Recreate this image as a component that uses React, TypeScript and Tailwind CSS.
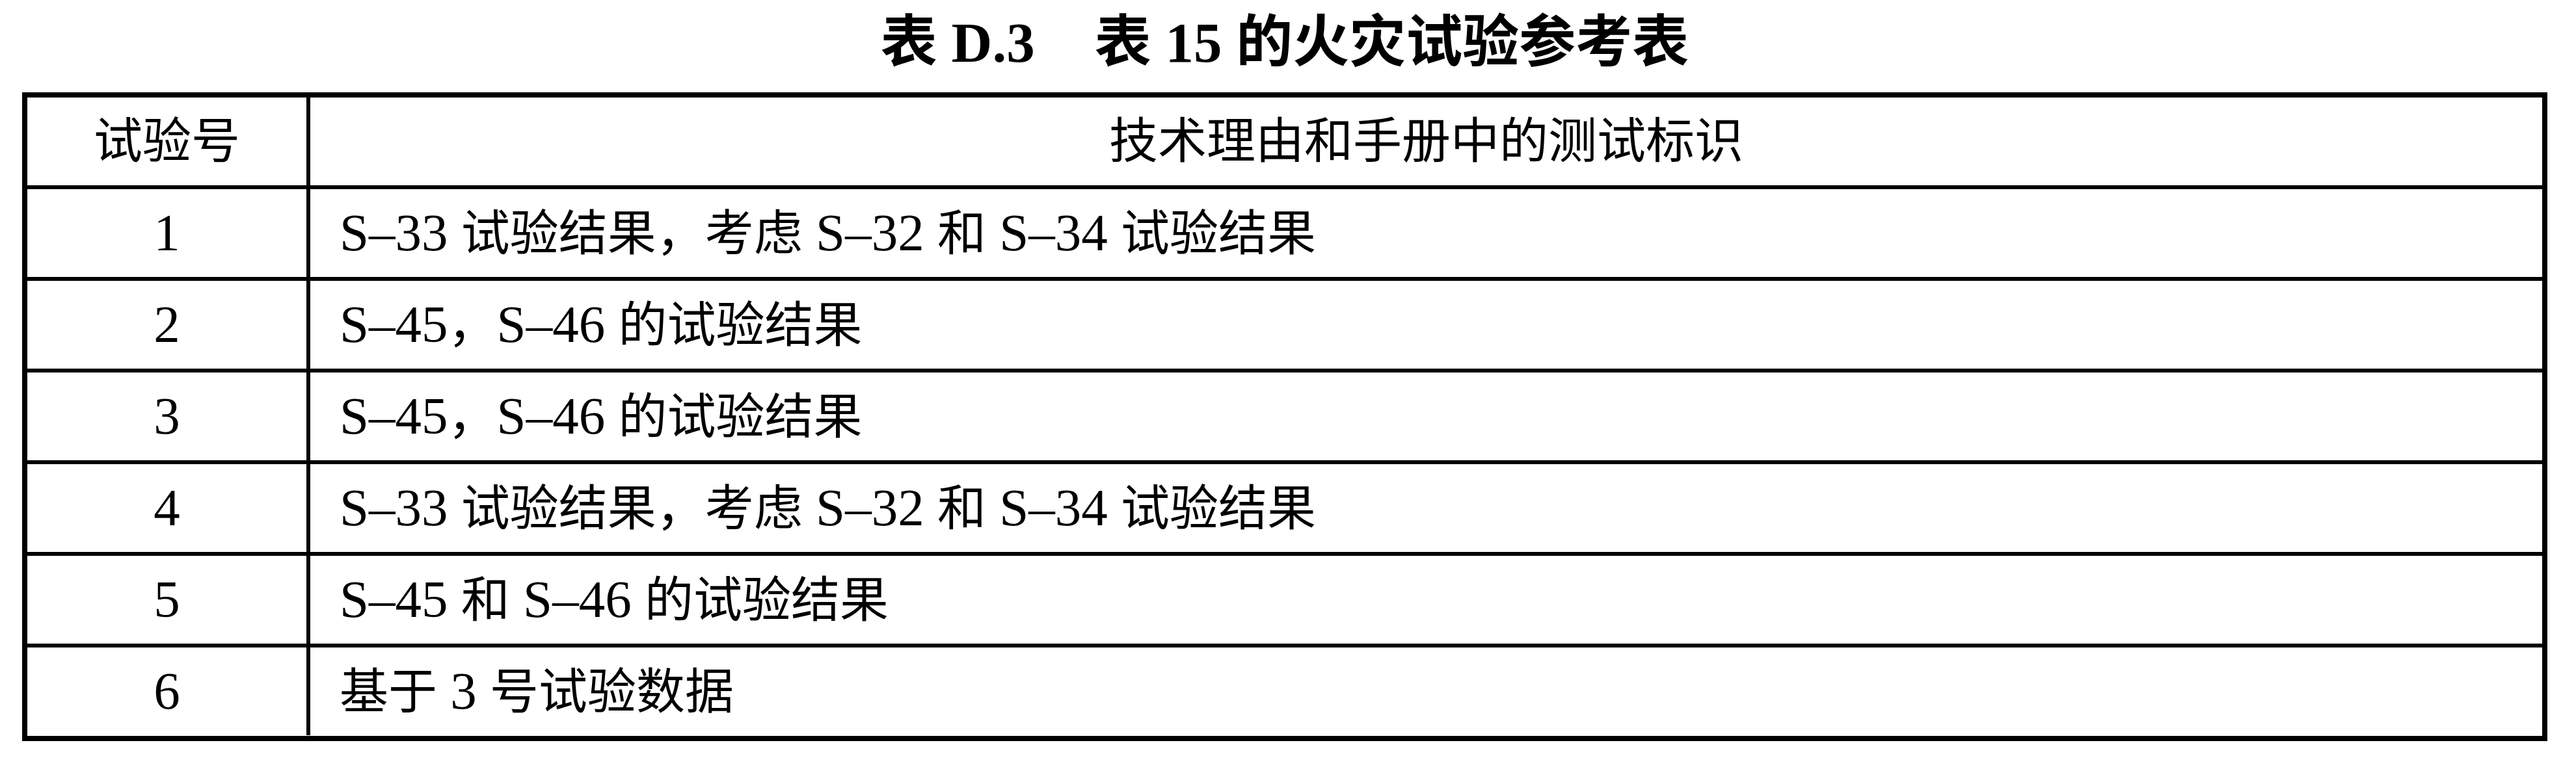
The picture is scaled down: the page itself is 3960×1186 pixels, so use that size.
const rows: [string, string][] = [
  ["1", "S–33 试验结果，考虑 S–32 和 S–34 试验结果"],
  ["2", "S–45，S–46 的试验结果"],
  ["3", "S–45，S–46 的试验结果"],
  ["4", "S–33 试验结果，考虑 S–32 和 S–34 试验结果"],
  ["5", "S–45 和 S–46 的试验结果"],
  ["6", "基于 3 号试验数据"],
];

const serif = "font-['Liberation_Serif','Noto_Sans_CJK_SC',serif]";

// Latin runs are set a little larger, like the Times glyphs in the scan
function Mixed({ text }: { text: string }) {
  const parts = text.split(/([A-Za-z0-9 .–]+)/).filter(Boolean);
  return (
    <span>
      {parts.map((part, i) =>
        /[A-Za-z0-9]/.test(part) ? (
          <span key={i} className="text-[81px]">
            {part}
          </span>
        ) : (
          <span key={i}>{part}</span>
        )
      )}
    </span>
  );
}

export default function App() {
  return (
    <div className={`h-[1186px] w-[3960px] bg-white text-black ${serif}`}>
      <div className="ml-[34px] flex w-[3882px] flex-col">
        <h1 className="flex h-[142px] items-center justify-center pb-[12px] text-[87px] font-bold leading-none">
          <span>表 D.3</span>
          <span className="ml-[92px]">表 15 的火灾试验参考表</span>
        </h1>
        <div className="flex h-[998px] flex-col border-[8px] border-black text-[75px] leading-none">
          <div className="flex h-[135px]">
            <div className="flex w-[429px] items-center justify-center">试验号</div>
            <div className="flex flex-1 items-center justify-center border-l-[6px] border-black">
              技术理由和手册中的测试标识
            </div>
          </div>
          {rows.map(([no, text]) => (
            <div key={no} className="flex h-[141px] border-t-[6px] border-black">
              <div className="flex w-[429px] items-center justify-center text-[81px]">{no}</div>
              <div className="flex flex-1 items-center border-l-[6px] border-black pl-[45px]">
                <Mixed text={text} />
              </div>
            </div>
          ))}
        </div>
      </div>
    </div>
  );
}
